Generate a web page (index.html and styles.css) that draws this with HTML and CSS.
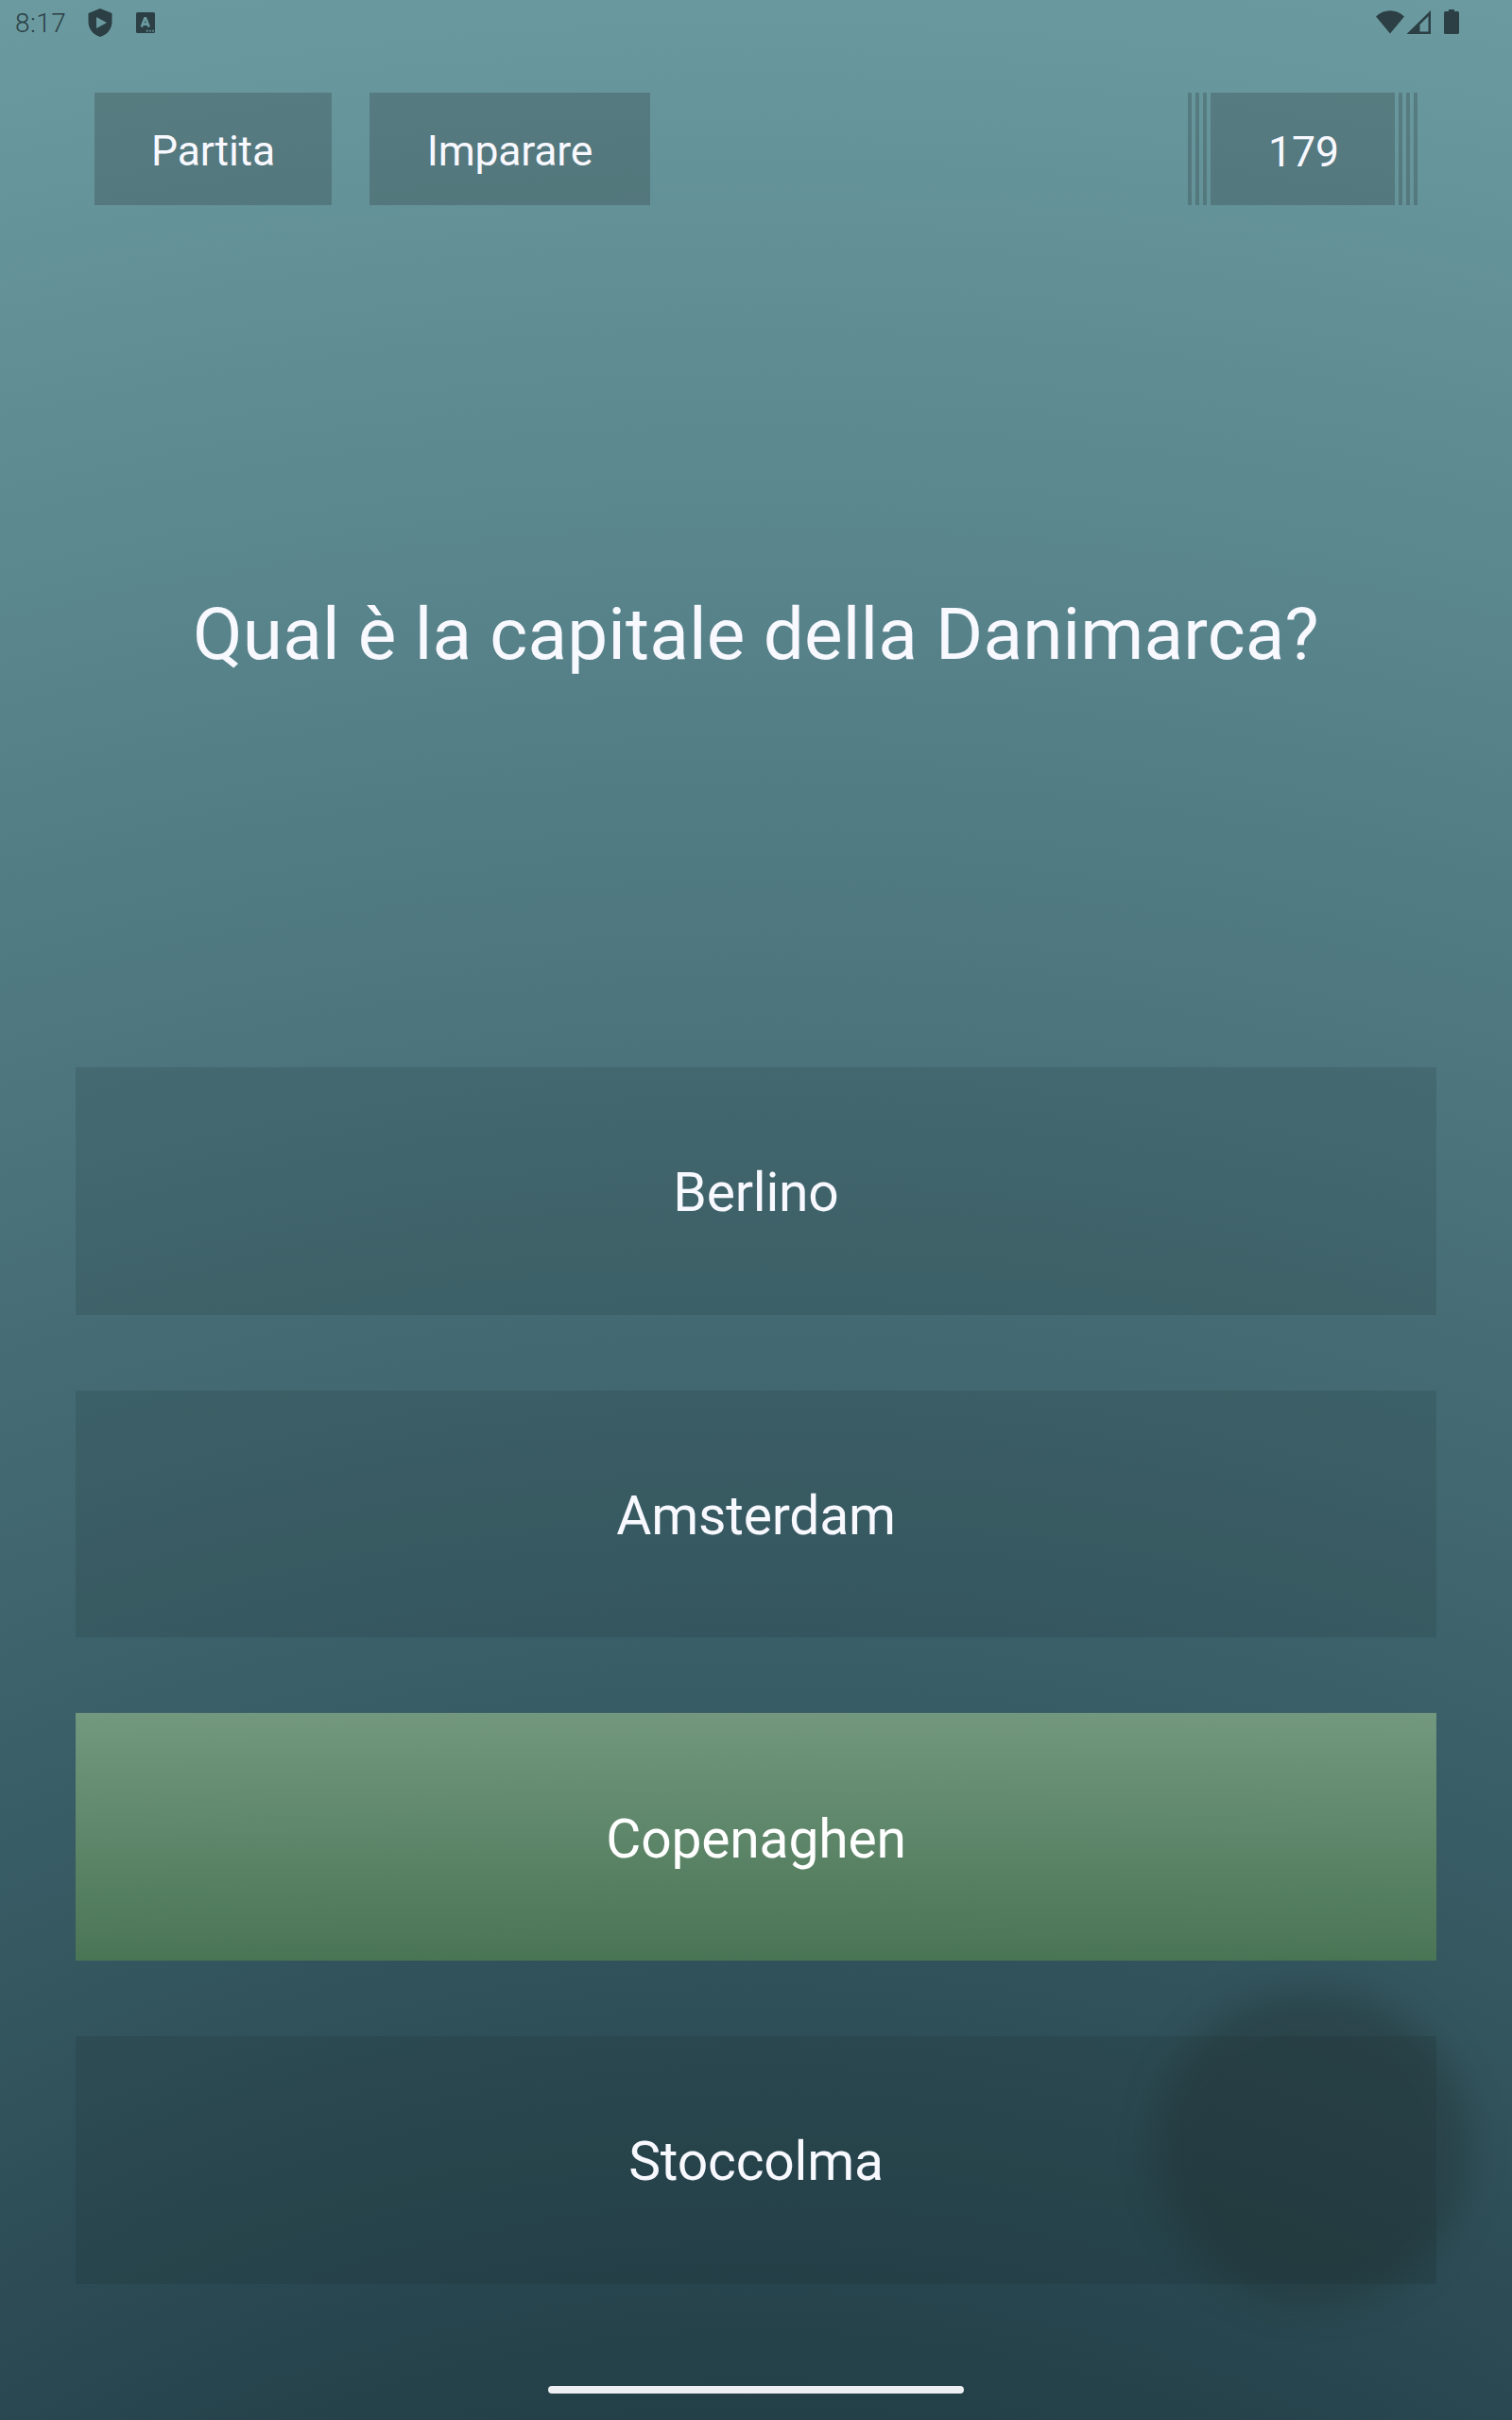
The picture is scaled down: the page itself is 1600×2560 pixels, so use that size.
FILE: index.html
```html
<!DOCTYPE html>
<html lang="it">
<head>
  <meta charset="UTF-8" />
  <meta name="viewport" content="width=device-width, initial-scale=1.0" />
  <title>Quiz</title>
  <link rel="stylesheet" href="styles.css">
</head>
<body>
  <div class="screen">
    <div class="status-bar">
      <span class="time">8:17</span>
      <svg class="shield" width="26" height="32" viewBox="0 0 26 32">
        <path fill-rule="evenodd" d="M13 1 L25.5 6 V15 C25.5 23 20 29 13 31 C6 29 0.5 23 0.5 15 V6 Z M9 10 V22 L20 16 Z" />
      </svg>
      <svg class="keyboard" width="20" height="22" viewBox="0 0 20 22">
        <rect width="20" height="22" rx="1.5" />
        <path class="cut" d="M5.8 15.5 L9.3 6.2 H10.1 L13.7 15.5 M7.2 12.6 H12.2" />
        <path class="dots" d="M10.5 19.7 H13 M14 19.7 H16 M17 19.7 H19 M11.8 18.5 V21 M15 18.5 V21 M18 18.5 V21" />
      </svg>
      <div class="status-right">
        <svg width="90" height="28" viewBox="0 0 90 28">
          <path d="M0 7.5 C8.5 -0.8 21.5 -0.8 30 7.5 L15 25.5 Z" />
          <path fill-rule="evenodd" d="M58 1 V26 H32.5 Z M55.5 7 L46.5 16 V23.5 H55.5 Z" />
          <path d="M77 0 H83 V2 H86.5 Q88 2 88 3.5 V24.5 Q88 26 86.5 26 H73.5 Q72 26 72 24.5 V3.5 Q72 2 73.5 2 H77 Z" />
        </svg>
      </div>
    </div>

    <div class="toolbar">
      <button class="menu-button">Partita</button>
      <button class="menu-button wide">Imparare</button>
      <div class="score">
        <i></i><i></i><i></i>
        <span class="score-value">179</span>
        <i></i><i></i><i></i>
      </div>
    </div>

    <div class="question">Qual è la capitale della Danimarca?</div>

    <div class="answers">
      <button class="answer">Berlino</button>
      <button class="answer">Amsterdam</button>
      <button class="answer correct">Copenaghen</button>
      <button class="answer">Stoccolma</button>
    </div>

    <div class="home-bar"></div>
    <div class="touch"></div>
  </div>
</body>
</html>
```
FILE: styles.css
```css
body {
  margin: 0;
  font-family: Roboto, sans-serif;
  color: #f8f8ff;
}

.screen {
  position: relative;
  display: flex;
  flex-direction: column;
  box-sizing: border-box;
  width: 1600px;
  height: 2560px;
  overflow: hidden;
  background: radial-gradient(circle at 50% 150%, #233f48 1280px, #395d66 2070px, #6b9ba1 3922px);
}

.status-bar {
  display: flex;
  align-items: center;
  height: 48px;
  padding: 0 54px 0 16px;
  color: #2b3f44;
}

.status-bar svg {
  fill: #2b3f44;
}

.time {
  width: 77px;
  padding-top: 2px;
  font-size: 28px;
  font-weight: 300;
  line-height: 48px;
  letter-spacing: 0.4px;
}

.keyboard {
  margin-left: 25px;
}

.keyboard .cut {
  fill: none;
  stroke: #6a9a9f;
  stroke-width: 2.6;
}

.keyboard .dots {
  fill: none;
  stroke: #6a9a9f;
  stroke-width: 0.8;
}

.status-right {
  display: flex;
  margin-left: auto;
}

.toolbar {
  display: flex;
  height: 119px;
  margin-top: 50px;
  padding: 0 100px;
}

button {
  border: none;
  border-radius: 0;
  font-family: inherit;
  color: inherit;
}

.menu-button {
  width: 251px;
  padding: 4px 0 0;
  margin-right: 40px;
  font-size: 44.5px;
  letter-spacing: -0.2px;
  background: rgba(22, 22, 22, 0.21);
}

.menu-button.wide {
  width: 297px;
}

.score {
  display: flex;
  gap: 4px;
  margin-left: auto;
}

.score i {
  width: 4px;
  background: rgba(22, 22, 22, 0.21);
}

.score-value {
  box-sizing: border-box;
  width: 195px;
  padding: 5px 0 0 2px;
  font-size: 44.5px;
  line-height: 116px;
  text-align: center;
  background: rgba(22, 22, 22, 0.21);
}

.question {
  display: flex;
  align-items: center;
  justify-content: center;
  box-sizing: border-box;
  height: 912px;
  padding-bottom: 4px;
  font-size: 76.5px;
  letter-spacing: 0.15px;
}

.answers {
  display: grid;
  grid-template-rows: repeat(4, 1fr);
  gap: 80px;
  height: 1286.67px;
  padding: 0 80px;
}

.answer {
  padding: 4px 0 0;
  font-size: 57px;
  letter-spacing: -0.2px;
  background: rgba(16, 24, 28, 0.12);
}

.answer.correct {
  color: #fff;
  background: linear-gradient(rgba(128, 166, 132, 0.8), rgba(80, 125, 83, 0.8));
}

.home-bar {
  width: 440px;
  height: 8px;
  margin: 108px auto 0;
  border-radius: 4px;
  background: #eeeff3;
}

/* soft press mark left on the tapped answer */
.touch {
  position: absolute;
  left: 1222px;
  top: 2105px;
  width: 334px;
  height: 334px;
  border-radius: 50%;
  background: rgba(28, 40, 40, 0.32);
  filter: blur(18px);
  pointer-events: none;
}
```
